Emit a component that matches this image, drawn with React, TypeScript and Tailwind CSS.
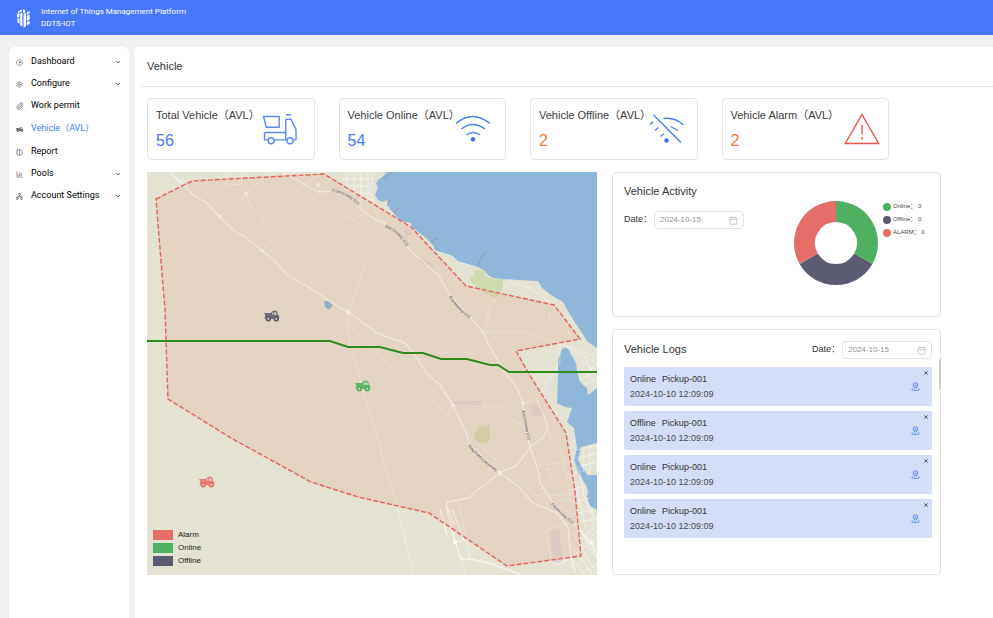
import { Calendar, ChevronDown, CircleGauge, Columns2, Network, Paperclip, Settings, ChartColumn } from "lucide-react";
import type { ReactNode } from "react";

const COLORS = {
  online: "#4fb062",
  offline: "#5a5a70",
  alarm: "#e56e68",
};

const TruckIcon = ({ color = "currentColor" }: { color?: string }) => (
  <g stroke={color} fill={color}>
    <path d="M0 2h7.6v1.6H9V.6h4l1.200 3.300 1 .8v3.300H.8V5.200l.5-.6z" stroke="none" fillOpacity="0.85" />
    <path d="M9.800 1.600h2.300l.8 2.100H9.800z" fill="#e3d5c8" stroke="none" />
    <circle cx="4.300" cy="7.800" r="1.900" fill="#e3d5c8" strokeWidth="1.700" />
    <circle cx="12.200" cy="7.800" r="1.900" fill="#e3d5c8" strokeWidth="1.700" />
    <path d="M7.600 4.600V1.400l2-1.100h3" fill="none" strokeWidth="1" />
  </g>
);

const navItems: { label: string; icon: ReactNode; expandable?: boolean; active?: boolean }[] = [
  { label: "Dashboard", icon: <CircleGauge size={7} />, expandable: true },
  { label: "Configure", icon: <Settings size={7} />, expandable: true },
  { label: "Work permit", icon: <Paperclip size={8} /> },
  {
    label: "Vehicle（AVL）",
    icon: (
      <svg width="7" height="5" viewBox="0 0 15 10">
        <TruckIcon />
      </svg>
    ),
    active: true,
  },
  { label: "Report", icon: <Columns2 size={7} /> },
  { label: "Pools", icon: <ChartColumn size={7} />, expandable: true },
  { label: "Account Settings", icon: <Network size={7} />, expandable: true },
];

const Header = () => (
  <header className="flex h-[35px] items-center gap-2.5 bg-[#4678fa] pl-4 text-white">
    <svg width="15" height="20" viewBox="0 0 15 20" fill="currentColor" aria-hidden="true">
      <path d="M2 3.4 6 1.6v1.7L2 5zM7 1.2l2.1.8v3.2L7 4.4zM1 6l2.4-1.1v4L1 10zM4.2 5.6l2.2-1v13.8l-2.2-1.2zM1.4 11l2-.9v5.6l-2-1.1z" />
      <path d="M7.6 6.2 10 5v13.2l-2.4 1.2zM10.8 4.5l2.8-1.4v2.2l-2.8 1.4zM10.8 7.7l2.8-1.3v5.2l-2.8 1.3zM10.8 14l2.8-1.3v3l-2.8 1.5z" />
    </svg>
    <div className="font-['Roboto',sans-serif] text-[8px] leading-[12px]">
      <p>Internet of Things Management Platform</p>
      <p>DDTS-IOT</p>
    </div>
  </header>
);

const Sidebar = () => (
  <nav className="w-[120px] shrink-0 rounded-t-md bg-white pt-1 font-['Roboto','Noto_Sans_CJK_SC',sans-serif]">
    <ul>
      {navItems.map((item) => (
        <li key={item.label}>
          <a
            href="#"
            className={`flex items-center pr-2 pl-[7px] text-[9px] ${
              item.active ? "h-6 text-[#4678fa]" : "h-[22px] text-black"
            }`}
          >
            <span className="flex w-[15px] text-[#555]">{item.icon}</span>
            <span className="flex-1 whitespace-nowrap">{item.label}</span>
            {item.expandable && <ChevronDown size={6} strokeWidth={3} />}
          </a>
        </li>
      ))}
    </ul>
  </nav>
);

const stats = [
  {
    label: "Total Vehicle（AVL）",
    value: 56,
    color: "text-[#4678e6]",
    icon: (
      <svg width="44" height="32" viewBox="0 0 44 32" fill="none" stroke="#5b8af5" strokeWidth="1.4">
        <path d="M1.5 3.5h15.700v10.800H4.300zM24 1.700h5M24 6.300h5l5 10v10.600h-2.700M25 26.900h-1.300V6.300M2.500 19.500h21.200M2.500 19.500v7.400h4M12 26.900h12.500" />
        <circle cx="9.200" cy="27.800" r="3" />
        <circle cx="28" cy="27.800" r="3" />
      </svg>
    ),
  },
  {
    label: "Vehicle Online（AVL）",
    value: 54,
    color: "text-[#4678e6]",
    icon: (
      <svg width="42" height="32" viewBox="0 0 42 32" fill="none" stroke="#4c7ef0" strokeWidth="1.4">
        <path d="M1 10.500Q17.500-3.500 35 10.500M6.300 16Q17.700 7 30 16M11.500 22Q18 17 25 22" />
        <circle cx="18" cy="26.300" r="2.200" fill="#3c6fea" stroke="none" />
      </svg>
    ),
  },
  {
    label: "Vehicle Offline（AVL）",
    value: 2,
    color: "text-[#f47a3c]",
    icon: (
      <svg width="40" height="32" viewBox="0 0 40 32" fill="none" stroke="#4c7ef0" strokeWidth="1.4">
        <path d="M4.500 2 32 29.500M14.500 5.500Q26 4 34.500 12M21.500 13.500 29 17.500M1 11.500l3.200-2.700M6 17.500l3.300-3M11.500 23.500l3.500-2.700" />
        <circle cx="17.500" cy="27.500" r="2.200" fill="#3c6fea" stroke="none" />
      </svg>
    ),
  },
  {
    label: "Vehicle Alarm（AVL）",
    value: 2,
    color: "text-[#f47a3c]",
    icon: (
      <svg width="36" height="32" viewBox="0 0 36 32" fill="none" stroke="#e4594e" strokeWidth="1.4">
        <path d="M18 1.500 34.700 30.500H1.300zM18 12v9.500M18 24v2.500" />
      </svg>
    ),
  },
];

const StatCards = () => (
  <div className="mr-[52px] grid grid-cols-4 gap-6">
    {stats.map((stat) => (
      <div key={stat.label} className="flex h-[62px] justify-between rounded-sm border border-[#e4e4e4] px-2">
        <div className="w-0 pt-2 whitespace-nowrap">
          <p className="text-[11px] leading-4 text-[#3c3c3c]">{stat.label}</p>
          <p className={`mt-2 text-base leading-5 ${stat.color}`}>{stat.value}</p>
        </div>
        <span className="mt-3.5">{stat.icon}</span>
      </div>
    ))}
  </div>
);

const roads = [
  "M23 1 35 11 46 23 60 31 73 45 85 57 98 65 115 79 127 88 140 103 165 117 185 131 201 140 215 150 228 160 240 165 258 171 268 183 280 202 293 213 306 233 318 258 323 273 353 301 370 313 386 331 410 341 421 355 424 385 428 401",
  "M136 1 157 12 171 20 186 19 201 23 218 41 228 47 240 53 253 63 263 78 291 103 303 123 323 145 336 160 343 175 356 198 370 216 376 231 378 255 383 275 391 298 393 311 406 331 426 351 445 371 450 385",
  "M390 227 401 255 396 266 383 275 370 293 353 301 328 320 322 326 300 330 299 335 308 370 314 387 323 387 345 392 373 402",
];

const minorRoads = [
  "M115 79 135 55 164 25 178 34",
  "M73 45 99 22 121 1M99 22 94 12 80 13 78 1M99 22 102 31 116 47M94 12 96 1",
  "M110 53 145 22 157 12 170 4M171 20 183 7M195 43 208 48 218 41",
  "M201 140 217 95M201 140 200 158 211 201 228 258 250 335 267 402",
  "M201 151 218 171 253 202 318 258 358 298 390 324 400 321",
  "M376 231 390 227 405 203 413 190 413 171M401 255 404 270 413 278 420 303 432 318",
  "M306 233 353 235 366 248 376 253M306 233 300 242",
  "M336 160 340 148 343 135 361 110 383 116 407 133 420 155 424 169M336 160 376 160 413 171 450 191M413 171 450 186",
  "M391 294 415 290 430 285M402 295 403 306M402 324 430 321M415 323V328H423V318",
  "M312 330 319 368 323 387M308 370 318 368M314 387 318 402",
  "M399 358 422 350M399 358 405 391 411 393 424 385",
  "M240 53 231 44 226 33 224 20 226 2M403 140 402 145 409 154",
];

const cityRoads = [
  "M200 1V20M207 1V28M214 1V33M221 1V37M196 7H226M200 14H224M205 21H224M211 28H225",
  "M430 278 450 273M432 286 450 281M433 294 450 290M436 278V300M443 275V302M426 288 433 300 437 325 446 345M420 303 430 300M422 318 439 314M424 330 443 326M425 342 447 338M428 350 450 347M430 318 438 355M439 326 450 350",
  "M425 360 450 402M432 355 450 388M424 372 445 402M424 385 437 402M430 372 450 352M429 382 450 365M430 393 450 378M438 400 450 391M415 393 450 360",
  "M438 185 446 202M432 186 444 197M440 202 450 192M432 208 450 200M436 213 450 206",
];

const FENCE =
  "M9 27 45 9 177 2 264 55 319 114 407 133 433 167 369 179 382 202 419 261 428 320 434 384 360 394 282 341 211 325 164 310 84 266 21 227 20 198 18 138z";

const VehicleMap = () => (
  <section className="relative h-[403px]" aria-label="Vehicle map">
    <svg
      className="block h-full w-full"
      viewBox="0 0 450 403"
      preserveAspectRatio="xMidYMid slice"
      fontFamily="Liberation Sans, sans-serif"
    >
      <rect width="450" height="403" fill="#e4e2d3" />

      {/* water */}
      <g fill="#8fb7da">
        <path d="M240 0 235 5 231 8 229 12 231 15 228 23 231 28 235 30 241 28 240 33 244 38 248 43 254 49 264 51 265 55 271 60 279 66 286 73 288 78 297 81 306 84 311 89 321 92 331 95 338 99 341 103 346 106 355 107 372 108 391 109 395 116 404 123 416 130 422 141 431 155 441 170 450 176V0z" />
        <path d="M411 203 411 188 415 177Q418 175 421 177L429 191 430 199 433 210 440 216 441 223 450 216V271L434 275 431 288 440 303H450V338L443 334 440 326 441 318 436 308 430 298 427 288 430 276 427 256 420 250 425 236 418 235 410 231z" />
        <path d="M177 129h4l5 4-4 5-4-3z" />
      </g>
      <g fill="none" stroke="#8297a8" strokeWidth="0.8">
        <path d="M236 7 246 0M331 94 335 84 340 79M286 72V68L291 66M247 41 251 36M240 30 246 27" />
      </g>

      {/* parks */}
      <g fill="#d0dab0">
        <path d="M322 106 328 103Q326 98 333 98T338 104L345 107 356 107V118L350 127 338 121 326 112z" />
        <path d="M326 266 332 255 343 253V266L340 271H331z" />
      </g>

      <g fill="#d8cfd0" opacity="0.6">
        <path d="M272 85 286 92V97L272 89zM257 58l6-2 2 6-6 3zM306 229h28v5h-28zM384 233h12v11h-10zM403 360l9-3 4 32-10 1z" />
      </g>

      <g fill="none" stroke="#fff" strokeLinejoin="round">
        {roads.map((d) => (
          <path key={d} d={d} strokeWidth="1.4" opacity="0.65" />
        ))}
        {minorRoads.map((d) => (
          <path key={d} d={d} strokeWidth="0.9" opacity="0.45" />
        ))}
        {cityRoads.map((d) => (
          <path key={d} d={d} strokeWidth="0.8" opacity="0.65" />
        ))}
        <path d="M293 337 300 363M300 335 307 353M305 337 317 368" strokeWidth="1.5" opacity="0.7" />
      </g>
      <g fill="#fff" opacity="0.75">
        <circle cx="73" cy="45" r="1.8" />
        <circle cx="99" cy="22" r="1.8" />
        <circle cx="115" cy="79" r="1.6" />
        <circle cx="201" cy="140" r="2.4" />
        <circle cx="171" cy="13" r="2" />
        <circle cx="306" cy="233" r="1.8" />
        <circle cx="353" cy="301" r="2.4" />
        <circle cx="376" cy="231" r="1.6" />
        <circle cx="308" cy="370" r="2" />
        <circle cx="445" cy="371" r="2" />
      </g>

      {/* geofence */}
      <path d={FENCE} fill="#e07a68" fillOpacity="0.13" />
      <path d={FENCE} fill="none" stroke="#e4655a" strokeWidth="1.4" strokeDasharray="5 2" />
      <path
        d="M0 169H183L201 175H233L256 181H276L294 187H320L343 193H351L362 200H450"
        fill="none"
        stroke="#2f8a1c"
        strokeWidth="2"
      />

      <defs>
        <path id="label-a" d="M185 20Q202 21 214 38" />
        <path id="label-b" d="M238 55Q253 60 262 80" />
        <path id="label-c" d="M302 125Q310 138 327 150" />
        <path id="label-d" d="M375 239 382 275" />
        <path id="label-e" d="M321 274Q332 288 356 304" />
        <path id="label-f" d="M404 332Q414 343 430 356" />
      </defs>
      <g fontSize="4" fill="#57505f">
        <text><textPath href="#label-a">Expressway 613</textPath></text>
        <text><textPath href="#label-b">Expressway 613</textPath></text>
        <text><textPath href="#label-c">Expressway 613</textPath></text>
        <text><textPath href="#label-d">Expressway 613</textPath></text>
        <text><textPath href="#label-e">King Fahd Causeway</textPath></text>
        <text><textPath href="#label-f">Expressway 613</textPath></text>
      </g>

      <g transform="translate(117 139)">
        <TruckIcon color={COLORS.offline} />
      </g>
      <g transform="translate(208 209)">
        <TruckIcon color={COLORS.online} />
      </g>
      <g transform="translate(52 305)">
        <TruckIcon color={COLORS.alarm} />
      </g>
    </svg>

    <ul className="absolute bottom-2 left-1.5 text-[8px] text-[#222]">
      <li className="flex h-[13px] items-center gap-[5px]">
        <span className="h-2.5 w-5 bg-[#e56e68]" />
        Alarm
      </li>
      <li className="flex h-[13px] items-center gap-[5px]">
        <span className="h-2.5 w-5 bg-[#4fb062]" />
        Online
      </li>
      <li className="flex h-[13px] items-center gap-[5px]">
        <span className="h-2.5 w-5 bg-[#5a5a70]" />
        Offline
      </li>
    </ul>
  </section>
);

const DateField = ({ id }: { id: string }) => (
  <div className="flex items-center text-[9px] text-[#333]">
    <label htmlFor={id} className="w-[30px] whitespace-nowrap">
      Date：
    </label>
    <div className="flex h-[18px] w-[90px] items-center rounded-sm border border-[#e2e2e2] px-[5px]">
      <input
        id={id}
        type="text"
        defaultValue="2024-10-15"
        className="w-0 flex-1 text-[8px] text-[#929292] outline-none"
      />
      <Calendar size={9} strokeWidth={1.5} className="text-[#aaa]" />
    </div>
  </div>
);

const activity = [
  { label: "Online： 0", dot: "bg-[#4fb062]" },
  { label: "Offline： 0", dot: "bg-[#5a5a70]" },
  { label: "ALARM： 0", dot: "bg-[#e56e68]" },
];

const VehicleActivity = () => (
  <section className="flex h-[145px] justify-between rounded-sm border border-[#e4e4e4] pr-[9px] pl-[11px]">
    <div className="pt-[9px]">
      <h2 className="mb-[11px] text-[11px] leading-[18px] text-[#333]">Vehicle Activity</h2>
      <DateField id="activity-date" />
    </div>
    <div className="flex gap-1 pt-[27px]">
      <svg width="86" height="86" viewBox="-43 -43 86 86" role="img" aria-label="Vehicle activity">
        <path d="M0-42A42 42 0 0 1 36.400 21L18.200 10.500A21 21 0 0 0 0-21z" fill={COLORS.online} />
        <path d="M36.400 21A42 42 0 0 1-36.400 21L-18.200 10.500A21 21 0 0 0 18.200 10.500z" fill={COLORS.offline} />
        <path d="M-36.400 21A42 42 0 0 1 0-42V-21A21 21 0 0 0-18.200 10.500z" fill={COLORS.alarm} />
      </svg>
      <ul className="w-12 text-[6px] whitespace-nowrap text-[#444]">
        {activity.map((item) => (
          <li key={item.label} className="flex h-[13px] items-center gap-0.5">
            <span className={`size-2 shrink-0 rounded-full ${item.dot}`} />
            {item.label}
          </li>
        ))}
      </ul>
    </div>
  </section>
);

const logs = [
  { status: "Online", name: "Pickup-001", time: "2024-10-10 12:09:09" },
  { status: "Offline", name: "Pickup-001", time: "2024-10-10 12:09:09" },
  { status: "Online", name: "Pickup-001", time: "2024-10-10 12:09:09" },
  { status: "Online", name: "Pickup-001", time: "2024-10-10 12:09:09" },
];

const VehicleLogs = () => (
  <section className="relative flex-1 rounded-sm border border-[#e4e4e4] pr-2 pl-[11px]">
    <div className="flex items-start justify-between pt-[11px]">
      <h2 className="text-[11px] leading-4 text-[#333]">Vehicle Logs</h2>
      <DateField id="logs-date" />
    </div>
    <ul className="mt-2 space-y-[5px]">
      {logs.map((log, i) => (
        <li key={i} className="flex h-[39px] justify-between rounded-xs bg-[#d4def7] pl-1.5">
          <div className="pt-[5px] text-[9px] leading-[15px]">
            <p className="flex gap-1.5 text-[#333]">
              <span>{log.status}</span>
              <span>{log.name}</span>
            </p>
            <p className="text-[#4a4a4a]">{log.time}</p>
          </div>
          <div className="flex">
            <button type="button" aria-label="Locate" className="text-[#5b8af5]">
              <svg width="9" height="9" viewBox="0 0 9 9" fill="none" stroke="currentColor">
                <circle cx="4.500" cy="3" r="2.300" />
                <path d="M4.500 2.300v1.200h1M3.300 5.400l1.200 1.300 1.200-1.300M1.600 6.200Q.3 7 .9 7.700T4.500 8.400 8.100 7.700 7.400 6.200" />
              </svg>
            </button>
            <button type="button" aria-label="Dismiss" className="flex h-3 w-3 items-center justify-center">
              <svg width="4" height="4" viewBox="0 0 4 4" stroke="#555" strokeWidth="0.900">
                <path d="M.300.300 3.700 3.700M3.700.300.300 3.700" />
              </svg>
            </button>
          </div>
        </li>
      ))}
    </ul>
    <span className="absolute top-[29px] -right-px h-[30px] w-0.5 rounded-full bg-[#ccc]" />
  </section>
);

export default function App() {
  return (
    <div className="flex min-h-screen flex-col bg-[#f0f0f0] font-['Liberation_Sans','Noto_Sans_CJK_SC',sans-serif]">
      <Header />
      <div className="flex flex-1 gap-[5px] pt-3 pl-[9px]">
        <Sidebar />
        <main className="flex-1 rounded-tl-md bg-white">
          <div className="ml-[7px] border-b border-[#e8e8e8] pl-1.5">
            <h1 className="text-[11px] leading-[39px] text-[#333]">Vehicle</h1>
          </div>
          <div className="pt-[11px] pr-[52px] pl-[13px]">
            <StatCards />
            <div className="mt-3 grid grid-cols-[450fr_329fr] gap-[15px]">
              <VehicleMap />
              <div className="flex flex-col gap-3">
                <VehicleActivity />
                <VehicleLogs />
              </div>
            </div>
          </div>
        </main>
      </div>
    </div>
  );
}
